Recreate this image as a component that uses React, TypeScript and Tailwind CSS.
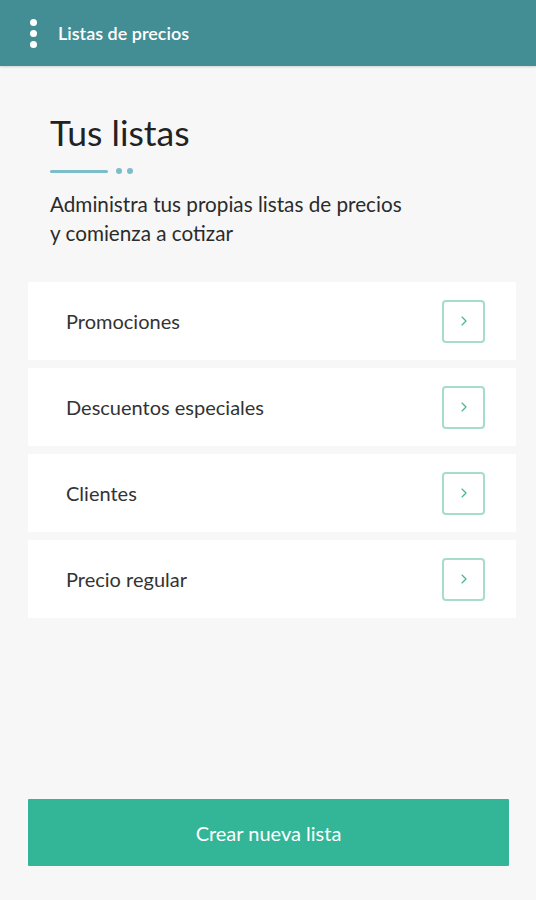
import { ChevronRight } from 'lucide-react'

const LISTS = ['Promociones', 'Descuentos especiales', 'Clientes', 'Precio regular']

export default function App() {
  return (
    <div
      className="min-h-[900px] bg-[#f7f7f7] flex flex-col"
      style={{ fontFamily: 'Lato, "Open Sans", sans-serif' }}
    >
      <header className="h-[66px] bg-[#438d94] flex items-center shadow-[0_1px_2px_rgba(0,0,0,0.15)]">
        <div className="w-[58px] flex justify-center pl-[8px]">
          <div className="flex flex-col gap-[4px]">
            <span className="block w-[7px] h-[7px] rounded-full bg-white" />
            <span className="block w-[7px] h-[7px] rounded-full bg-white" />
            <span className="block w-[7px] h-[7px] rounded-full bg-white" />
          </div>
        </div>
        <h1 className="text-[18px] font-semibold text-white">Listas de precios</h1>
      </header>

      <section className="px-[50px] pt-[44px]">
        <h2 className="text-[35.5px] leading-[46px] text-[#222]">Tus listas</h2>
        <div className="mt-[12px] flex items-center">
          <span className="block w-[58px] h-[3px] rounded-full bg-[#7bbdc9]" />
          <span className="ml-[8px] block w-[6px] h-[6px] rounded-full bg-[#7bbdc9]" />
          <span className="ml-[5px] block w-[6px] h-[6px] rounded-full bg-[#7bbdc9]" />
        </div>
        <p className="mt-[16px] text-[20.7px] leading-[29px] text-[#2b2b2b]">
          Administra tus propias listas de precios
          <br />y comienza a cotizar
        </p>
      </section>

      <ul className="mt-[34px] ml-[28px] mr-[20px] flex flex-col gap-[8px]">
        {LISTS.map((name) => (
          <li
            key={name}
            className="h-[78px] bg-white flex items-center justify-between pl-[38px] pr-[31px]"
          >
            <span className="text-[20px] text-[#333]">{name}</span>
            <span className="w-[43px] h-[43px] rounded-[4px] border-2 border-[#a6dccb] flex items-center justify-center">
              <ChevronRight className="w-[16px] h-[16px] text-[#45b597]" strokeWidth={1.75} />
            </span>
          </li>
        ))}
      </ul>

      <div className="flex-1" />

      <div className="pl-[28px] pr-[27px] pb-[34px]">
        <button className="w-full h-[67px] bg-[#33b697] text-white text-[20px] rounded-[1px]">
          Crear nueva lista
        </button>
      </div>
    </div>
  )
}
